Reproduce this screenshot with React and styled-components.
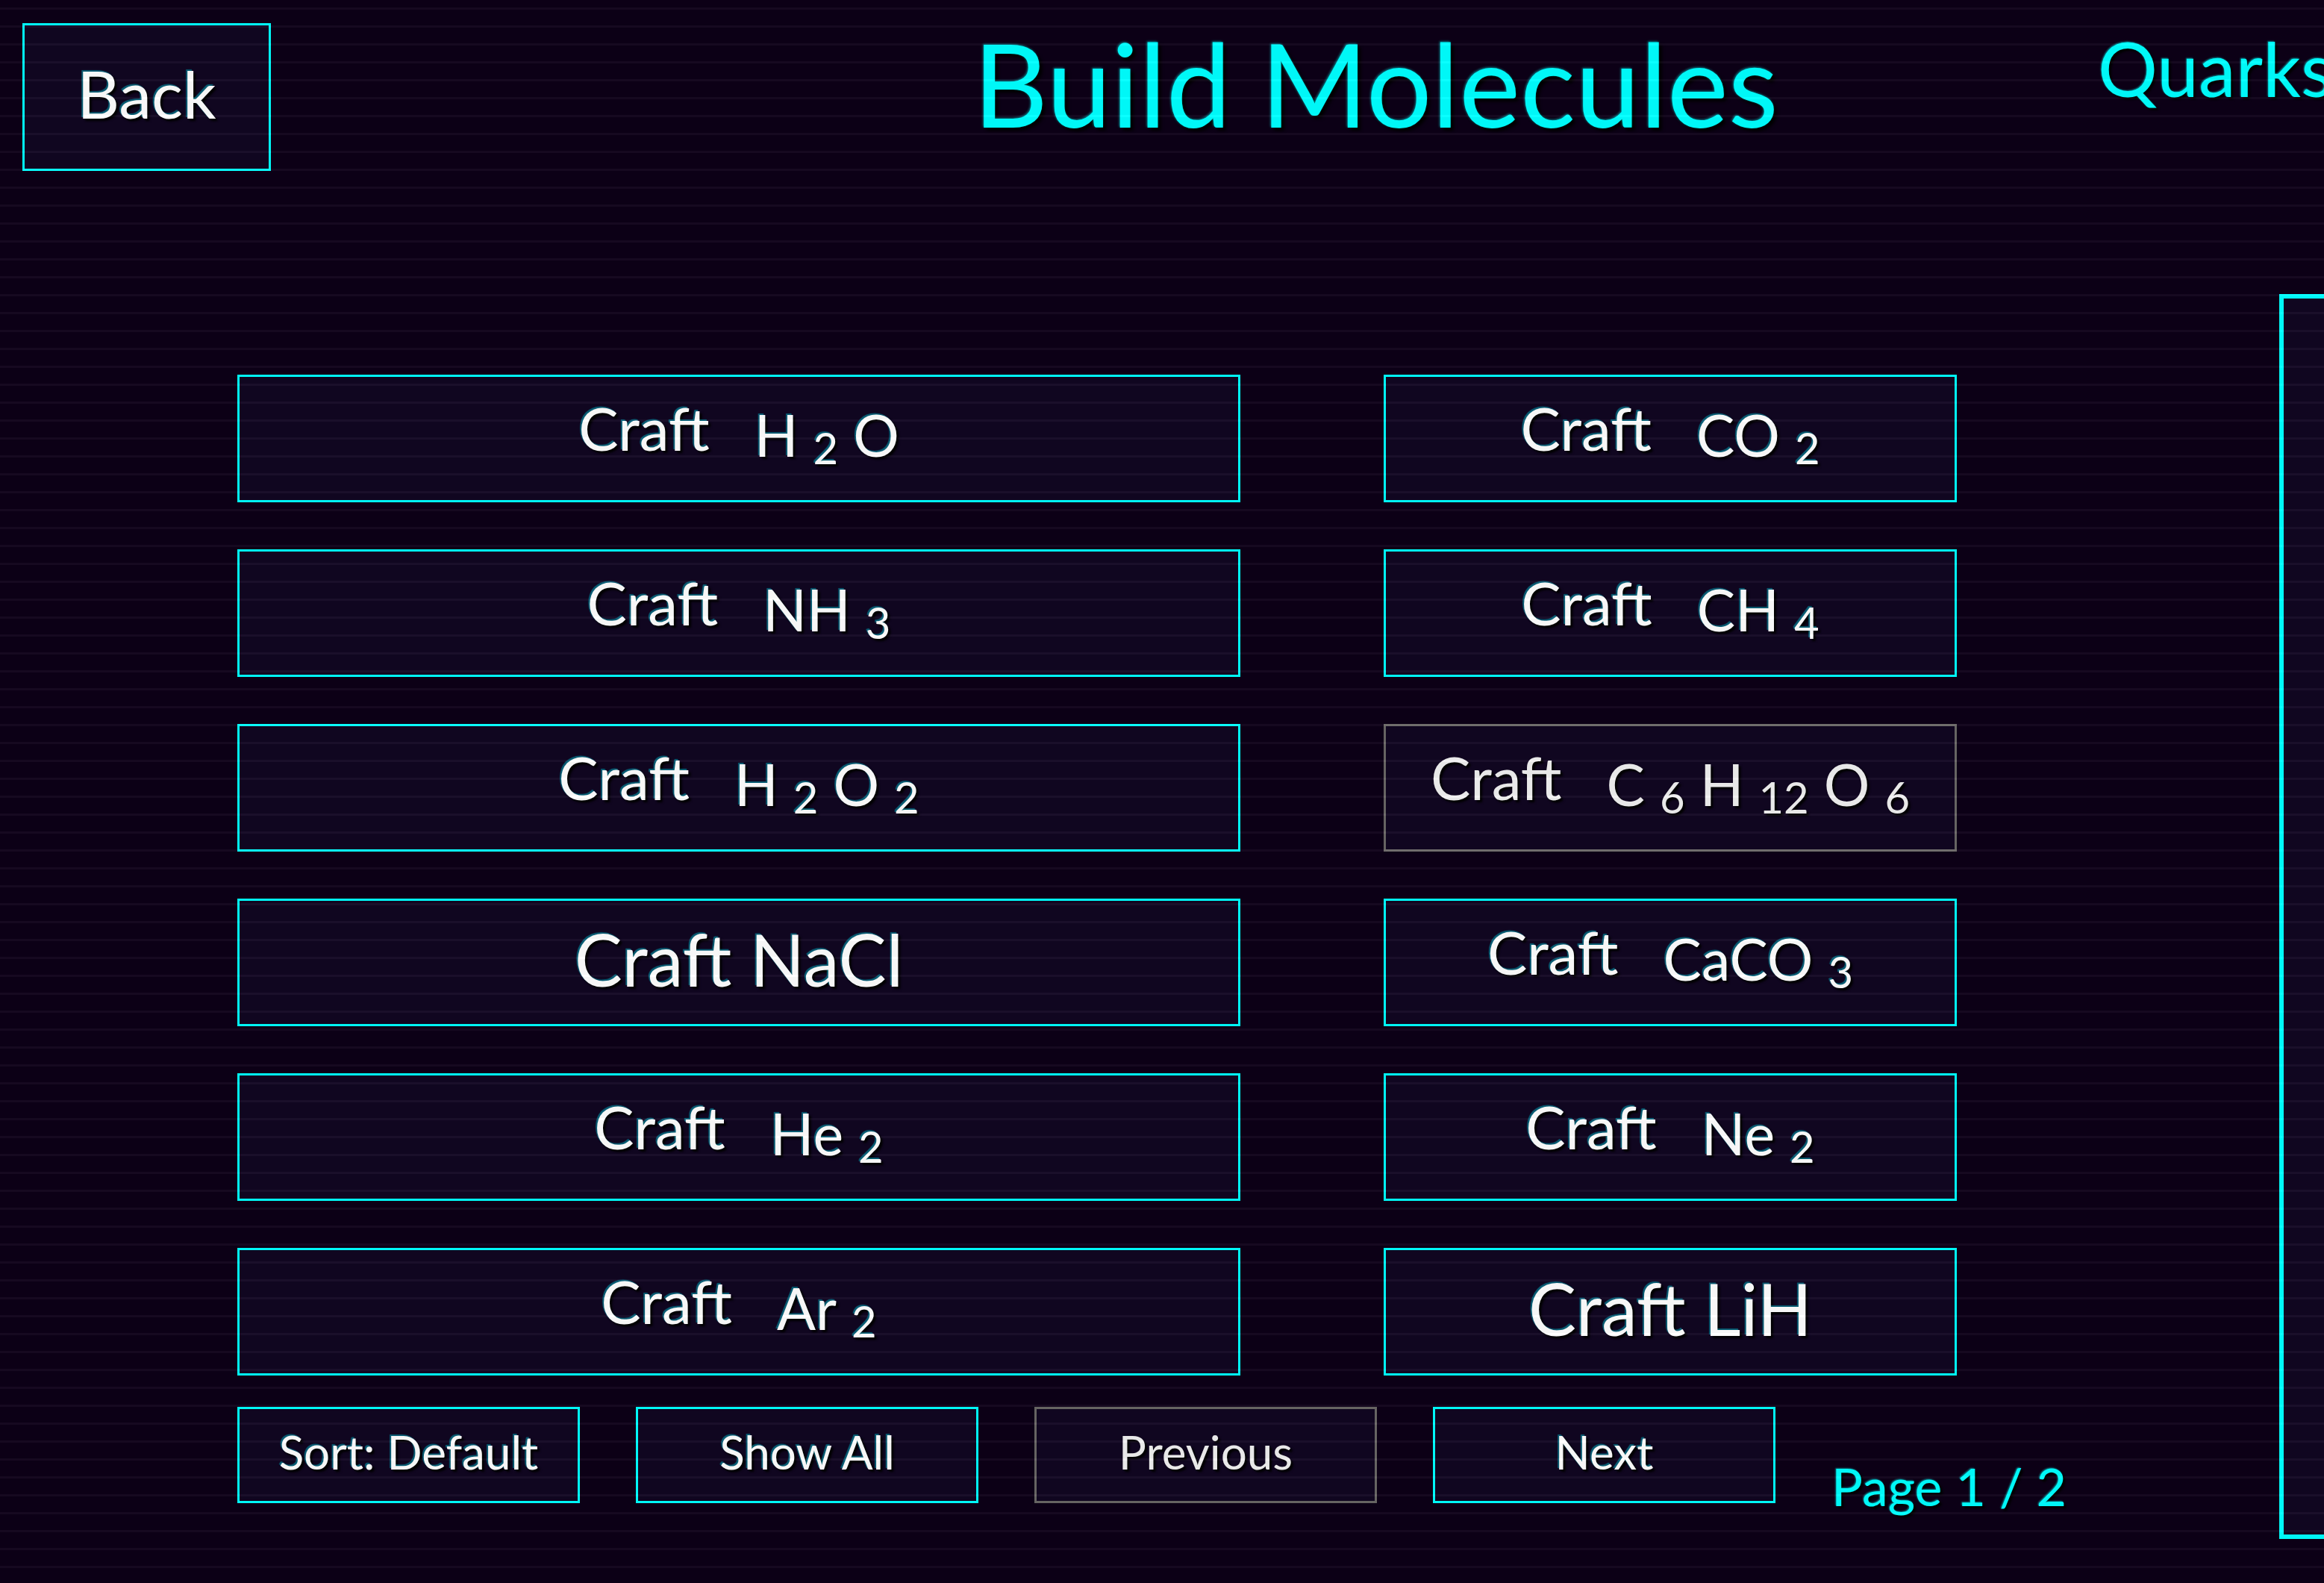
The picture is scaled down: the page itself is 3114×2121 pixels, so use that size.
import React, { useState } from 'react';
import styled, { createGlobalStyle } from 'styled-components';

const GlobalStyle = createGlobalStyle`
    * {
        box-sizing: border-box;
    }

    body {
        margin: 0;
        background: #0c0016;
        font-family: Lato, 'Open Sans', sans-serif;
    }
`;

const Screen = styled.div`
    position: relative;
    min-height: 100vh;
    overflow: hidden;
    background: #0c0016;
`;

const Scanlines = styled.div`
    position: absolute;
    inset: 0;
    pointer-events: none;
    mix-blend-mode: plus-lighter;
    background: repeating-linear-gradient(
        to bottom,
        transparent 0 10px,
        #0a090a 10px 13px,
        transparent 13px 24px
    );
`;

/* the board is wider than the window, its right side runs off screen */
const Board = styled.div`
    width: 118.4%;
    padding: 31px 30px 59px;
`;

const Header = styled.header`
    display: grid;
    grid-template-columns: 1fr auto 1fr;
    align-items: start;
    height: 363px;
`;

const Title = styled.h1`
    margin: 0;
    font-size: 155px;
    font-weight: 400;
    line-height: 160px;
    color: #00f7f7;
    text-shadow: -1px -1px 3px rgba(0, 247, 247, 0.5), 4px 4px 4px #000;
`;

const Quarks = styled.div`
    padding-left: 428px;
    font-size: 100px;
    line-height: 120px;
    white-space: nowrap;
    color: #00f7f7;
    text-shadow: -1px -1px 2px rgba(0, 247, 247, 0.5), 3px 3px 3px #000;
`;

const Button = styled.button`
    display: flex;
    align-items: center;
    justify-content: center;
    padding: 0 0 10px;
    border: 3px solid #00f7f7;
    background: #100620;
    color: #f6f6f6;
    font-family: inherit;
    line-height: 1;
    white-space: nowrap;
    text-shadow: -2px -2px 1px rgba(0, 180, 200, 0.5), 3px 3px 3px #000;
    cursor: pointer;

    &:disabled {
        border-color: #666462;
        color: #e8e8e8;
        text-shadow: 3px 3px 3px #000;
        cursor: default;
    }
`;

const BackButton = styled(Button)`
    width: 333px;
    height: 198px;
    font-size: 88px;
`;

const CraftButton = styled(Button)`
    height: 171px;
    font-size: ${props => props.$plain ? '96px' : '80px'};
`;

const FooterButton = styled(Button)`
    flex: none;
    width: 459px;
    height: 129px;
    font-size: 62px;
`;

const Main = styled.main`
    display: flex;
    gap: 432px;
    padding-left: 288px;
`;

const Crafting = styled.section`
    flex: none;
    width: 2304px;
    padding-top: 108px;
`;

const MoleculeGrid = styled.div`
    display: grid;
    grid-template-columns: 7fr 4fr;
    gap: 63px 192px;
`;

const Verb = styled.span`
    padding-bottom: 20px;
    margin-right: 60px;
`;

const Formula = styled.span`
    display: flex;
    align-items: center;
    gap: 20px;
    font-size: 77px;
`;

const Sub = styled.span`
    padding-top: 34px;
    font-size: 58px;
`;

const Footer = styled.footer`
    display: flex;
    align-items: flex-start;
    gap: 75px;
    margin-top: 42px;
`;

const PageLabel = styled.span`
    padding-top: 66px;
    font-size: 70px;
    line-height: 80px;
    white-space: nowrap;
    color: #00f7f7;
    text-shadow: -1px -1px 2px rgba(0, 247, 247, 0.5), 3px 3px 3px #000;
`;

const InfoPanel = styled.aside`
    flex: 1;
    height: 1668px;
    border: 6px solid #00f7f7;
    background: #100620;
`;

const molecules = [
    'H2O', 'CO2',
    'NH3', 'CH4',
    'H2O2', 'C6H12O6',
    'NaCl', 'CaCO3',
    'He2', 'Ne2',
    'Ar2', 'LiH',
];

const locked = ['C6H12O6'];

function Molecule({ name }) {
    const parts = name.match(/\d+|\D+/g);

    if(parts.length === 1) {
        return <CraftButton $plain>Craft {name}</CraftButton>;
    }

    return (
        <CraftButton disabled={locked.includes(name)}>
            <Verb>Craft</Verb>
            <Formula>
                {parts.map((part, i) => (
                    /\d/.test(part) ? <Sub key={i}>{part}</Sub> : <span key={i}>{part}</span>
                ))}
            </Formula>
        </CraftButton>
    );
}

function App() {

    const [page, setPage] = useState(1);

    return (
        <>
            <GlobalStyle/>
            <Screen>
                <Board>
                    <Header>
                        <BackButton>Back</BackButton>
                        <Title>Build Molecules</Title>
                        <Quarks>Quarks</Quarks>
                    </Header>
                    <Main>
                        <Crafting>
                            <MoleculeGrid>
                                {molecules.map(name => <Molecule key={name} name={name}/>)}
                            </MoleculeGrid>
                            <Footer>
                                <FooterButton>Sort: Default</FooterButton>
                                <FooterButton>Show All</FooterButton>
                                <FooterButton disabled={page === 1} onClick={() => setPage(1)}>Previous</FooterButton>
                                <FooterButton disabled={page === 2} onClick={() => setPage(2)}>Next</FooterButton>
                                <PageLabel>Page {page} / 2</PageLabel>
                            </Footer>
                        </Crafting>
                        <InfoPanel/>
                    </Main>
                </Board>
                <Scanlines/>
            </Screen>
        </>
    );
}


export default App;
